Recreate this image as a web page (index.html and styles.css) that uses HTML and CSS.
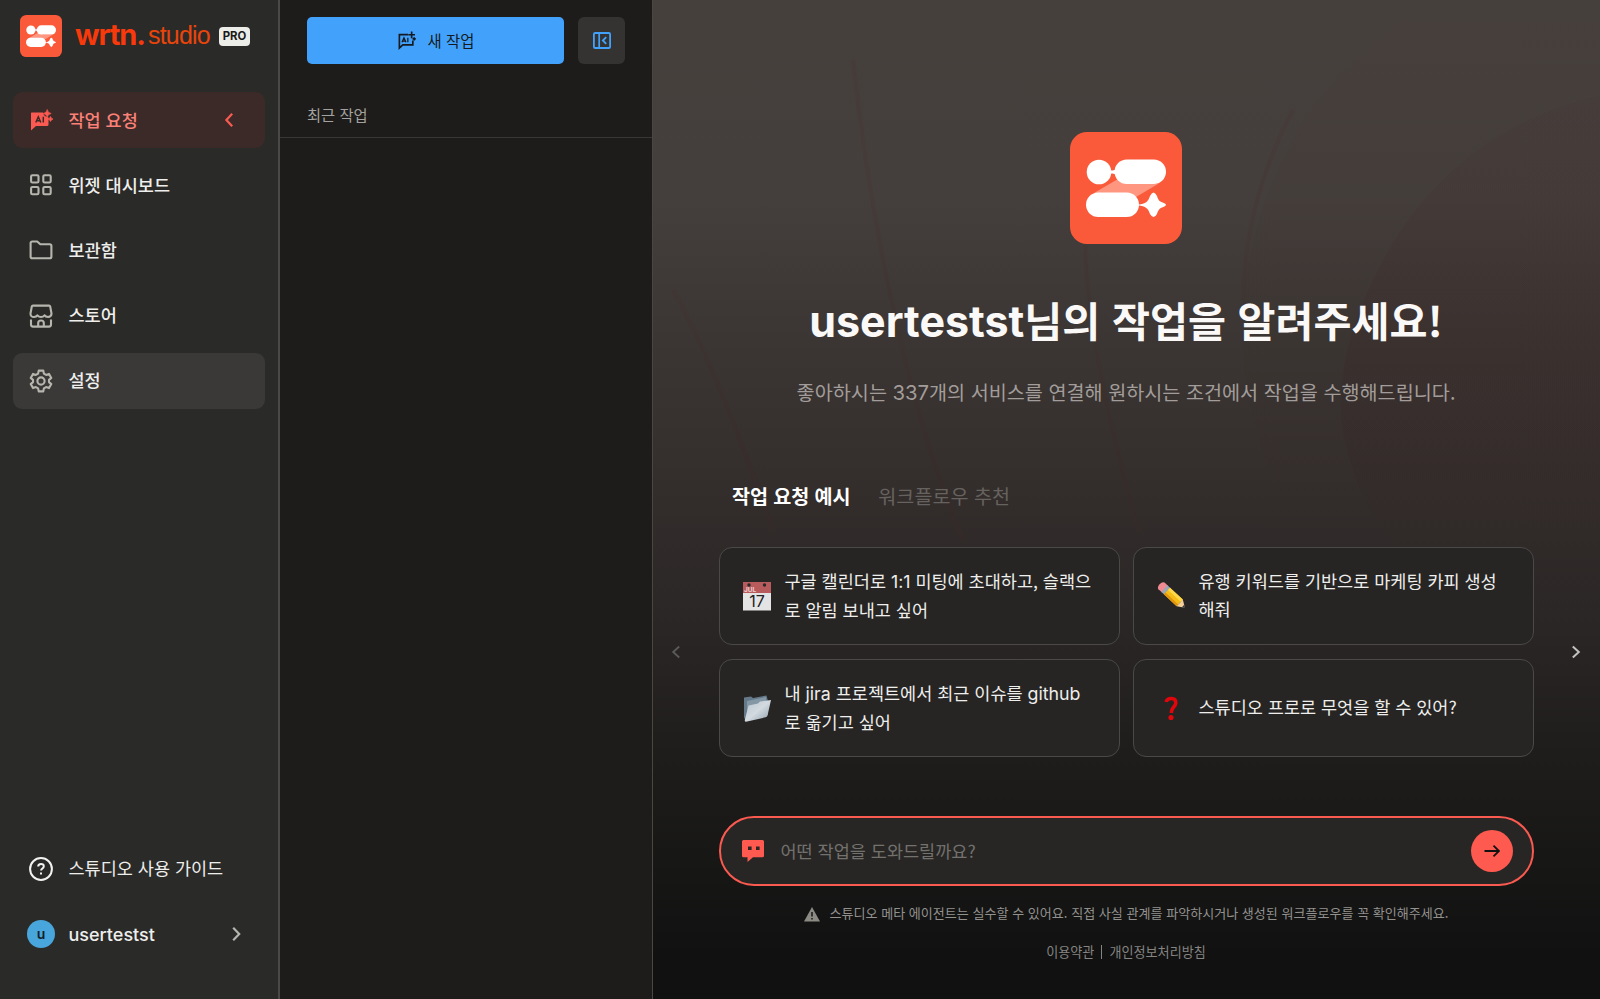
FILE: index.html
```html
<!DOCTYPE html>
<html lang="ko">
<head>
<meta charset="utf-8">
<title>wrtn. studio PRO</title>
<link rel="stylesheet" href="styles.css">
</head>
<body>
<svg class="defs" width="0" height="0" aria-hidden="true">
  <symbol id="logo" viewBox="0 0 112 112">
    <rect width="112" height="112" rx="17" fill="#fb5a3a"/>
    <path d="M24 61 48 47 62 52H88L66 65Z" fill="#ff9680"/>
    <circle cx="29" cy="40" r="12.3" fill="#fff"/>
    <path d="M38 38.200Q42 40 46 38.200V41.800Q42 40 38 41.800Z" fill="#fff" stroke="#fff"/>
    <rect x="44.500" y="27.500" width="51.500" height="24.500" rx="12.250" fill="#fff"/>
    <rect x="16" y="60.500" width="53" height="24.500" rx="12.250" fill="#fff"/>
    <path d="M68 72.800C76 71.500 78 70 80 64Q83.500 57 87 64C88.500 69 90 69.800 94 71Q98 72.800 94 74.700C90 76 88.500 77 87 82Q83.500 88 80 82C78 76 76 74.500 68 73.200Z" fill="#fff"/>
  </symbol>
</svg>
<div class="app">
  <aside class="sidebar">
    <div class="brand">
      <svg class="brand-logo"><use href="#logo"/></svg>
      <span class="brand-name">wrtn.</span><span class="brand-sub">studio</span><span class="pro">PRO</span>
    </div>
    <nav class="nav">
      <a class="item active">
        <svg class="icon" viewBox="0 0 24 24"><path d="M2.500 4.500H14Q14.500 8.500 19.500 9.500V16.500Q19.500 18 18 18H7L2 22.500V5.500Q2 4.500 2.500 4.500Z" fill="#fb5a52"/><path d="M18.200 1.500Q18.700 5 22.200 5.500Q18.700 6 18.200 9.500Q17.700 6 14.200 5.500Q17.700 5 18.200 1.500ZM21.500 8.500Q22 10.500 24 11Q22 11.500 21.500 13.500Q21 11.500 19 11Q21 10.500 21.500 8.500Z" fill="#fb5a52" stroke="#fb5a52" stroke-width=".7"/><path d="M6.800 14.500 9.300 8.800 11.800 14.500M7.700 12.800H10.900M14.300 8.800V14.500" fill="none" stroke="#3b2a27" stroke-width="1.500"/></svg>
        <span class="label">작업 요청</span>
        <svg class="chev" viewBox="0 0 16 16"><path d="M11.200 1.800 5.400 8l5.800 6.200" fill="none" stroke="#fb5a52" stroke-width="2.200"/></svg>
      </a>
      <a class="item">
        <svg class="icon line" viewBox="0 0 24 24"><rect x="2.100" y="2.300" width="7.400" height="7.200" rx="1.300"/><rect x="14.300" y="2.300" width="7.400" height="7.200" rx="1.300"/><rect x="2.100" y="14" width="7.400" height="7.200" rx="1.300"/><rect x="14.300" y="14" width="7.400" height="7.200" rx="1.300"/></svg>
        <span class="label">위젯 대시보드</span>
      </a>
      <a class="item">
        <svg class="icon line" viewBox="0 0 24 24"><path d="M1.600 18.800V5.200Q1.600 3.500 3.300 3.500H8.200L11.300 6.200H20.700Q22.400 6.200 22.400 7.900V18.500Q22.400 20.300 20.700 20.300H3.200Q1.600 20.300 1.600 18.800Z"/></svg>
        <span class="label">보관함</span>
      </a>
      <a class="item">
        <svg class="icon line" viewBox="0 0 24 24"><path d="M2.800 2.500Q3 1.600 4 1.600H20Q21 1.600 21.200 2.500L22.500 9.500Q22.500 13 19 13Q16.500 13 15.600 11.300Q14.200 13 12 13Q9.800 13 8.400 11.300Q7.500 13 5 13Q1.500 13 1.500 9.500ZM2 15.500V20.500Q2 22.600 4 22.600H20Q22 22.600 22 20.500V15.500M9.200 22V19Q9.200 16.500 12 16.500Q14.800 16.500 14.800 19V22"/></svg>
        <span class="label">스토어</span>
      </a>
      <a class="item hover">
        <svg class="icon line" viewBox="0 0 24 24"><path d="M9.700 1.600H14.300L14.900 4.600 17.100 5.900 20 4.900 22.300 8.900 20 10.900V13.100L22.300 15.100 20 19.100 17.100 18.100 14.900 19.400 14.300 22.400H9.700L9.100 19.400 6.900 18.100 4 19.100 1.700 15.100 4 13.100V10.900L1.700 8.900 4 4.900 6.900 5.900 9.100 4.600Z"/><circle cx="12" cy="12" r="3.600"/></svg>
        <span class="label">설정</span>
      </a>
    </nav>
    <div class="nav bottom">
      <a class="item">
        <svg class="icon guide" viewBox="0 0 24 24"><circle cx="12" cy="12" r="10.900"/><path d="M9.200 9.600Q9.200 7 12 7Q14.800 7 14.800 9.300Q14.800 10.700 13.300 11.600Q12.100 12.300 12.100 13.600"/><path d="M12 15.600V17.600"/></svg>
        <span class="label regular">스튜디오 사용 가이드</span>
      </a>
      <a class="item user">
        <span class="avatar">u</span>
        <span class="label latin">usertestst</span>
        <svg class="chev" viewBox="0 0 16 16"><path d="M4.200 1.800 10.200 8l-6 6.200" fill="none" stroke="#b4b4b0" stroke-width="2.200"/></svg>
      </a>
    </div>
  </aside>

  <section class="history">
    <div class="toolbar">
      <button class="new-task">
        <svg class="new-icon" viewBox="0 0 24 24" fill="none" stroke="#151a20" stroke-width="2.100"><path d="M14 4.500H3V21.500L7.300 17.500H20V12"/><path d="M18.500.5V9M14.300 4.700H22.700M21.700 8V12M19.700 10H23.700"/><path d="M6.300 14.300 8.800 8.500 11.300 14.300M7.200 12.700H10.400M13.700 8.500V14.300" stroke-width="1.600"/></svg>
        <span>새 작업</span>
      </button>
      <button class="collapse">
        <svg viewBox="0 0 18 17" fill="none" stroke="#42a2fb"><rect x=".9" y="1" width="16.200" height="15" rx="1.300" stroke-width="1.800"/><path d="M6.200 1V16" stroke-width="1.700"/><path d="M13.200 5.200 9.900 8.500l3.300 3.300" stroke-width="1.900"/></svg>
      </button>
    </div>
    <h2 class="history-title">최근 작업</h2>
  </section>

  <main class="main">
    <svg class="backdrop" viewBox="0 0 947 999" aria-hidden="true">
      <defs>
        <linearGradient id="fade" x1="0" y1="0" x2="0" y2="1"><stop offset="0" stop-color="#4a2024" stop-opacity=".05"/><stop offset=".45" stop-color="#3a1418" stop-opacity=".12"/><stop offset="1" stop-color="#2a1214" stop-opacity="0"/></linearGradient>
      </defs>
      <path d="M947 95Q800 130 730 260Q665 380 700 470Q740 600 947 640Z" fill="url(#fade)"/>
      <path d="M747 20Q610 120 590 300Q580 430 660 560H947V20Z" fill="url(#fade)" opacity=".4"/>
      <g fill="none" stroke="#4a2828" stroke-width="4" opacity=".13"><path d="M200 60Q215 200 245 330T310 540"/><path d="M432 245Q435 350 485 530"/><path d="M20 290Q60 360 120 530"/><path d="M590 300Q592 200 640 110"/></g>
    </svg>
    <div class="content">
      <svg class="hero-logo"><use href="#logo"/></svg>
      <h1><span class="latin">usertestst</span>님의 작업을 알려주세요!</h1>
      <p class="lead">좋아하시는 <span class="latin">337</span>개의 서비스를 연결해 원하시는 조건에서 작업을 수행해드립니다.</p>
      <div class="tabs"><span class="tab on">작업 요청 예시</span><span class="tab">워크플로우 추천</span></div>
      <div class="carousel">
        <svg class="arrow prev" viewBox="0 0 16 16"><path d="M11.200 2.500 5.200 8l6 5.500" fill="none" stroke="#5d5b59" stroke-width="1.800"/></svg>
        <div class="cards">
          <div class="card">
            <svg class="emoji" viewBox="0 0 30 30"><rect x="1" y="1" width="28" height="28.500" fill="#e4e4e4"/><rect x="1" y="1" width="28" height="11" fill="#b75b5c"/><circle cx="7" cy="4" r="1.700" fill="#292929"/><circle cx="22.500" cy="4" r="1.700" fill="#292929"/><text x="2" y="10.500" class="cal-month">JUL</text><text x="15" y="25.800" text-anchor="middle" class="cal-day">17</text></svg>
            <p>구글 캘린더로 <span class="latin">1:1</span> 미팅에 초대하고, 슬랙으<br>로 알림 보내고 싶어</p>
          </div>
          <div class="card">
            <svg class="emoji" viewBox="0 0 30 30"><g transform="translate(4 3.500) rotate(43)"><path d="M2-4.500H7V4.500H2Q-.5 4-.5 0T2-4.500Z" fill="#f08a92"/><path d="M6-4.500H10V4.500H6Z" fill="#9ba6b5"/><path d="M9.500-4.500H27V4.500H9.500Z" fill="#f7bd17"/><path d="M9.500-4.500H27V-1.500H9.500Z" fill="#ffd84b"/><path d="M9.500 2H27V4.500H9.500Z" fill="#df950d"/><path d="M27-4.500 34 0 27 4.500Z" fill="#f3cf9c"/><path d="M31.500-1.600 34.500 0 31.500 1.600Z" fill="#343640"/></g></svg>
            <p>유행 키워드를 기반으로 마케팅 카피 생성<br>해줘</p>
          </div>
          <div class="card">
            <svg class="emoji" viewBox="0 0 30 30"><defs><linearGradient id="folder" x1="0" y1="0" x2="1" y2="1"><stop stop-color="#b8c4cd"/><stop offset=".5" stop-color="#d3dae0"/><stop offset="1" stop-color="#8e9da9"/></linearGradient></defs><path d="M2 4.500 9 3.500 11 5 24.500 2.500 26 8V22L3.500 26Q2 26 2 24Z" fill="#64798a"/><path d="M5 8 24 4V12L5 18Z" fill="#8497a5"/><path d="M6.500 12.500 16 10.500 18 8.500 29 7 25.500 22.500Q25 24 23.500 24.300L4 28.700Q2.500 28.700 2.800 27Z" fill="url(#folder)"/></svg>
            <p>내 <span class="latin">jira</span> 프로젝트에서 최근 이슈를 <span class="latin">github</span><br>로 옮기고 싶어</p>
          </div>
          <div class="card">
            <svg class="emoji" viewBox="0 0 30 30"><path d="M10.200 9Q10.800 5.500 15.500 5.500Q19.800 5.500 19.800 9.700Q19.800 12 17.500 14.300Q15.500 16.300 15.300 20" fill="none" stroke="#e0060b" stroke-width="3.600"/><circle cx="15" cy="24.500" r="2.600" fill="#e0060b"/></svg>
            <p>스튜디오 프로로 무엇을 할 수 있어?</p>
          </div>
        </div>
        <svg class="arrow next" viewBox="0 0 16 16"><path d="M4.800 2.500 10.800 8l-6 5.500" fill="none" stroke="#c4c2c0" stroke-width="2"/></svg>
      </div>
      <div class="prompt">
        <svg class="bot" viewBox="0 0 22 22"><path d="M1.500 0H20.500Q22 0 22 1.500V15.700Q22 17.200 20.500 17.200H11L5.500 22V17.200H1.500Q0 17.200 0 15.700V1.500Q0 0 1.500 0Z" fill="#ff5a50"/><path d="M6 6.500H9.600V10.100H6ZM14 6.500H17.600V10.100H14Z" fill="#272624"/></svg>
        <span class="placeholder">어떤 작업을 도와드릴까요?</span>
        <button class="send"><svg viewBox="0 0 16 16" fill="none" stroke="#111" stroke-width="1.800"><path d="M.5 8H15M9.500 2.700 15 8l-5.500 5.300"/></svg></button>
      </div>
      <p class="notice"><svg viewBox="0 0 16 15"><path d="M8 0 16 14.500H0Z" fill="#8b8a83"/><path d="M8 5V9.500M8 11V12.500" stroke="#171717" stroke-width="1.500"/></svg><span>스튜디오 메타 에이전트는 실수할 수 있어요. 직접 사실 관계를 파악하시거나 생성된 워크플로우를 꼭 확인해주세요.</span></p>
      <footer class="legal"><a>이용약관</a><i class="bar"></i><a>개인정보처리방침</a></footer>
    </div>
  </main>
</div>
</body>
</html>
```

FILE: styles.css
```css
* { box-sizing: border-box; }
body {
  margin: 0;
  background: #1d1c1a;
  color: #eeeeec;
  font-family: "Noto Sans CJK KR", sans-serif;
  font-size: 17.4px;
}
h1, h2, p { margin: 0; font-weight: 400; }
button { border: 0; padding: 0; font: inherit; }
svg { display: block; flex: none; }
.defs { position: absolute; }
.latin { font-family: Inter, sans-serif; }
.app { display: flex; width: 1600px; height: 999px; overflow: hidden; }

/* Sidebar */
.sidebar {
  display: flex;
  flex-direction: column;
  width: 280px;
  padding: 15px 13px 37px;
  background: #2a2a28;
  border-right: 2px solid #4a4948;
}
.brand { display: flex; align-items: center; height: 42px; padding-left: 7px; white-space: nowrap; }
.brand-logo { width: 42px; height: 42px; }
.brand-name {
  width: 73px;
  margin-left: 13px;
  padding-bottom: 3px;
  color: #f8390c;
  font: 700 29px/39px Inter, sans-serif;
  letter-spacing: -1.1px;
}
.brand-sub {
  width: 71px;
  padding-bottom: 1px;
  color: #e8450c;
  font: 400 25px/39px "Liberation Sans", sans-serif;
  letter-spacing: -.8px;
}
.pro {
  width: 31px;
  height: 19px;
  border-radius: 4px;
  background: #ecece8;
  color: #1a1a18;
  font: 700 11.400px/19px Inter, sans-serif;
  text-align: center;
}
.nav { display: flex; flex-direction: column; gap: 9.200px; margin-top: 35px; }
.nav.bottom { margin-top: auto; }
.item {
  display: flex;
  align-items: center;
  height: 56px;
  padding: 0 28px 0 16px;
  border-radius: 9px;
}
.item.active { background: #3b2a27; color: #fb8078; }
.item.hover { background: #3a3937; }
.icon { width: 24px; height: 24px; }
.icon.line { fill: none; stroke: #b7b6ae; stroke-width: 2.100; stroke-linejoin: round; }
.icon.guide { fill: none; stroke: #f2f2f0; stroke-width: 2; }
.label { flex: 1; margin-left: 15.500px; padding-bottom: 1px; line-height: 28px; font-size: 17.500px; font-weight: 500; white-space: nowrap; }
.label.regular { font-weight: 400; }
.label.latin { margin-left: 13.500px; padding: 1px 0 0; font-size: 18px; }
.user { padding: 0 20px 0 14px; }
.avatar {
  width: 28px;
  height: 28px;
  border-radius: 50%;
  background: #48a6dc;
  color: #10202a;
  font: 600 14px/28px Inter, sans-serif;
  text-align: center;
}
.chev { width: 16px; height: 16px; }

/* History panel */
.history { width: 373px; border-right: 1px solid #4a4644; background: #1d1c1a; }
.toolbar { display: flex; gap: 14px; padding: 17px 27px 0 27px; }
.new-task {
  display: flex;
  align-items: center;
  justify-content: center;
  gap: 12px;
  width: 257px;
  height: 47px;
  border-radius: 5px;
  background: #42a2fb;
  color: #151a20;
  font-size: 15.400px;
}
.new-icon { width: 19px; height: 19px; }
.new-task span { padding-bottom: 2px; }
.collapse {
  display: flex;
  align-items: center;
  justify-content: center;
  width: 47px;
  height: 47px;
  border-radius: 6px;
  background: #343331;
}
.collapse svg { width: 18px; height: 17px; }
.history-title {
  height: 74px;
  padding: 38px 0 0 27px;
  border-bottom: 1px solid #383735;
  color: #a3a29f;
  font-size: 15.300px;
  line-height: 24px;
}

/* Main */
.main {
  position: relative;
  flex: 1;
  background: linear-gradient(#46403d 0, #443f3c 20%, #3b3633 34%, #352f2d 46%, #2c2827 60%, #201e1d 74%, #171716 86%, #111 96%);
}
.backdrop { position: absolute; inset: 0; width: 947px; height: 999px; }
.content { position: relative; display: flex; flex-direction: column; align-items: center; padding: 132px 1px 0 0; }
.hero-logo { width: 112px; height: 112px; }
h1 { margin-top: 44.500px; font-size: 41.300px; line-height: 60px; height: 60px; font-weight: 700; color: #faf9f8; white-space: nowrap; }
h1 .latin { font-size: 43px; }
.lead { margin-top: 28.500px; color: #a29d9a; font-size: 19.650px; line-height: 30px; height: 30px; white-space: nowrap; }
.lead .latin { font-size: 20.300px; }
.tabs { display: flex; gap: 28px; width: 815px; margin-top: 73.500px; padding-left: 13.500px; font-size: 19.600px; line-height: 30px; }
.tab { color: #66625f; white-space: nowrap; }
.tab.on { color: #fff; font-weight: 700; letter-spacing: -.1px; }
.carousel { display: flex; align-items: center; justify-content: space-between; width: 100%; margin-top: 36.500px; padding: 0 15px; }
.arrow { width: 16px; height: 16px; }
.cards { display: grid; grid-template-columns: 401px 401px; grid-auto-rows: 98px; gap: 14px 13px; }
.card {
  display: flex;
  align-items: center;
  gap: 13px;
  padding: 0 22px;
  border: 1px solid #4a4947;
  border-radius: 13px;
  background: #262523;
  font-size: 17.500px;
  font-weight: 500;
  line-height: 28px;
  white-space: nowrap;
}
.card p { padding-bottom: 2px; }
.card .latin { font-size: 17.800px; }
.emoji { width: 30px; height: 30px; }
.cal-month { font: 700 6.500px Inter, sans-serif; fill: #f0cccc; }
.cal-day { font: 400 16px Inter, sans-serif; fill: #222; }
.prompt {
  display: flex;
  align-items: center;
  width: 815px;
  height: 70px;
  margin-top: 59px;
  padding: 0 19px 0 21px;
  border: 2px solid #fb5a50;
  border-radius: 35px;
  background: #272624;
}
.bot { width: 22px; height: 22px; }
.placeholder { flex: 1; margin-left: 17px; padding-bottom: 2px; color: #73716e; font-size: 17.500px; }
.send { display: flex; align-items: center; justify-content: center; width: 42px; height: 42px; border-radius: 50%; background: #ff5a50; }
.send svg { width: 16px; height: 16px; }
.notice { display: flex; align-items: center; gap: 10px; margin-top: 17px; color: #92918e; font-size: 13.060px; line-height: 20px; white-space: nowrap; }
.notice svg { width: 16px; height: 15px; }
.notice span { padding-bottom: 2px; }
.legal { display: flex; align-items: center; gap: 7px; margin-top: 17px; color: #858481; font-size: 13.100px; line-height: 20px; }
.bar { width: 1px; height: 14px; background: #858481; }
```
